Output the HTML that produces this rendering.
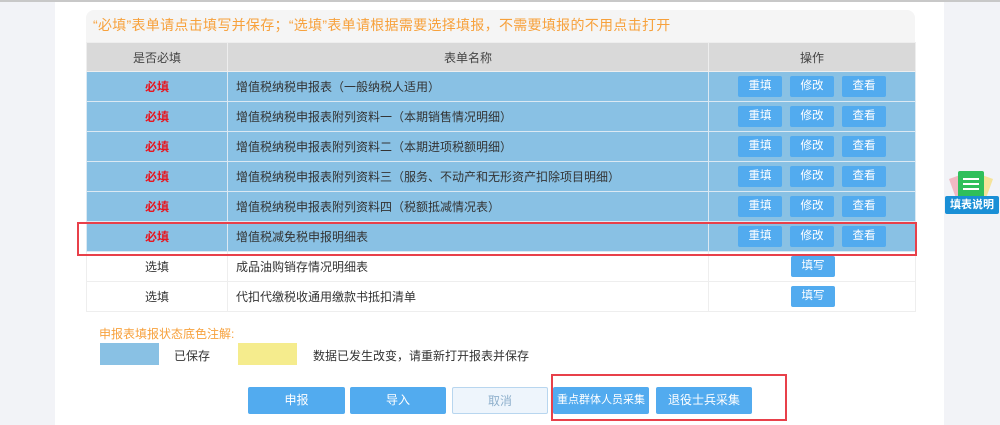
<!DOCTYPE html>
<html><head><meta charset="utf-8"><style>
*{margin:0;padding:0;box-sizing:border-box}
body{width:1000px;height:425px;overflow:hidden;background:#f2f3f7;font-family:"Liberation Sans","Noto Sans CJK SC",sans-serif;font-size:12px;color:#333;position:relative}
.topline{position:absolute;left:0;top:0;width:1000px;height:2px;background:#c8c8c8}
.main{position:absolute;left:55px;top:2px;width:889px;height:423px;background:#fff}
.panel{position:absolute;left:86px;top:10px;width:829px;height:33px;background:#f5f5f5;border-radius:8px 8px 0 0}
.tip{position:absolute;left:93px;top:15px;color:#f7a13c;font-size:14px;letter-spacing:0.3px;white-space:nowrap}
table{position:absolute;left:86px;top:42px;width:829px;border-collapse:collapse;table-layout:fixed}
td,th{height:30px;border:1px solid #e8eef3;font-weight:normal;vertical-align:middle}
th{background:#d9d9d9;color:#444;border-color:#eee;height:29px}
tr.b td{background:#89c1e4;border-color:#dbe9f3}
tr.w td{background:#fff;border-color:#eeeeee}
.c{text-align:center}
.n{padding-left:8px}
.r{color:#e8141e;font-weight:bold}
.btn{display:inline-block;vertical-align:middle;width:44px;height:21px;line-height:21px;background:#52abef;color:#fff;border-radius:2px;text-align:center;margin:0 4px;font-size:11.5px}
.ops{text-align:left;padding-left:25px}
.ops1{text-align:left;padding-left:78px}
.redbox{position:absolute;border:2px solid #e8404a}
.legend{position:absolute;left:99px;top:325px;color:#f7a13c;font-size:12px}
.sw{position:absolute;top:343px;width:59px;height:22px}
.lt{position:absolute;top:347px;font-size:12px}
.bb{position:absolute;top:387px;height:27px;line-height:27px;text-align:center;background:#52abef;color:#fff;border-radius:2px;font-size:12px;white-space:nowrap}
.side{position:absolute;left:944px;top:170px}
</style></head><body>
<div class="topline"></div>
<div class="main"></div>
<div class="panel"></div>
<div class="tip">“必填”表单请点击填写并保存；“选填”表单请根据需要选择填报，不需要填报的不用点击打开</div>
<table>
<colgroup><col style="width:141px"><col style="width:481px"><col style="width:207px"></colgroup>
<tr><th>是否必填</th><th>表单名称</th><th>操作</th></tr>
<tr class="b"><td class="c r">必填</td><td class="n">增值税纳税申报表（一般纳税人适用）</td><td class="ops"><span class="btn">重填</span><span class="btn">修改</span><span class="btn">查看</span></td></tr>
<tr class="b"><td class="c r">必填</td><td class="n">增值税纳税申报表附列资料一（本期销售情况明细）</td><td class="ops"><span class="btn">重填</span><span class="btn">修改</span><span class="btn">查看</span></td></tr>
<tr class="b"><td class="c r">必填</td><td class="n">增值税纳税申报表附列资料二（本期进项税额明细）</td><td class="ops"><span class="btn">重填</span><span class="btn">修改</span><span class="btn">查看</span></td></tr>
<tr class="b"><td class="c r">必填</td><td class="n">增值税纳税申报表附列资料三（服务、不动产和无形资产扣除项目明细）</td><td class="ops"><span class="btn">重填</span><span class="btn">修改</span><span class="btn">查看</span></td></tr>
<tr class="b"><td class="c r">必填</td><td class="n">增值税纳税申报表附列资料四（税额抵减情况表）</td><td class="ops"><span class="btn">重填</span><span class="btn">修改</span><span class="btn">查看</span></td></tr>
<tr class="b"><td class="c r">必填</td><td class="n">增值税减免税申报明细表</td><td class="ops"><span class="btn">重填</span><span class="btn">修改</span><span class="btn">查看</span></td></tr>
<tr class="w"><td class="c">选填</td><td class="n">成品油购销存情况明细表</td><td class="ops1"><span class="btn">填写</span></td></tr>
<tr class="w"><td class="c">选填</td><td class="n">代扣代缴税收通用缴款书抵扣清单</td><td class="ops1"><span class="btn">填写</span></td></tr>
</table>
<div class="redbox" style="left:77px;top:222px;width:840px;height:34px"></div>
<div class="legend">申报表填报状态底色注解:</div>
<div class="sw" style="left:100px;background:#89c1e4"></div>
<div class="lt" style="left:174px">已保存</div>
<div class="sw" style="left:238px;background:#f5ec8d"></div>
<div class="lt" style="left:313px">数据已发生改变，请重新打开报表并保存</div>
<div class="bb" style="left:248px;width:97px">申报</div>
<div class="bb" style="left:350px;width:96px">导入</div>
<div class="bb" style="left:452px;width:96px;background:#eef5fc;color:#8fb0cc;border:1px solid #b8d6ef">取消</div>
<div class="bb" style="left:553px;width:96px;font-size:11px">重点群体人员采集</div>
<div class="bb" style="left:656px;width:96px">退役士兵采集</div>
<div class="redbox" style="left:551px;top:374px;width:236px;height:47px"></div>
<div class="side">
<div style="position:absolute;left:8px;top:6px;width:14px;height:20px;background:#f2b9c3;transform:rotate(-20deg)"></div>
<div style="position:absolute;left:32px;top:6px;width:14px;height:20px;background:#f5e39a;transform:rotate(20deg)"></div>
<div style="position:absolute;left:14px;top:1px;width:26px;height:28px;background:#2fbf5b;border-radius:2px"></div>
<div style="position:absolute;left:19px;top:8px;width:16px;height:2px;background:#fff;box-shadow:0 5px 0 #fff,0 10px 0 #fff"></div>
<div style="position:absolute;left:1px;top:26px;width:54px;height:18px;background:#1a8fd6;color:#fff;font-size:11px;font-weight:bold;line-height:18px;text-align:center;border-radius:2px">填表说明</div>
</div>
</body></html>
